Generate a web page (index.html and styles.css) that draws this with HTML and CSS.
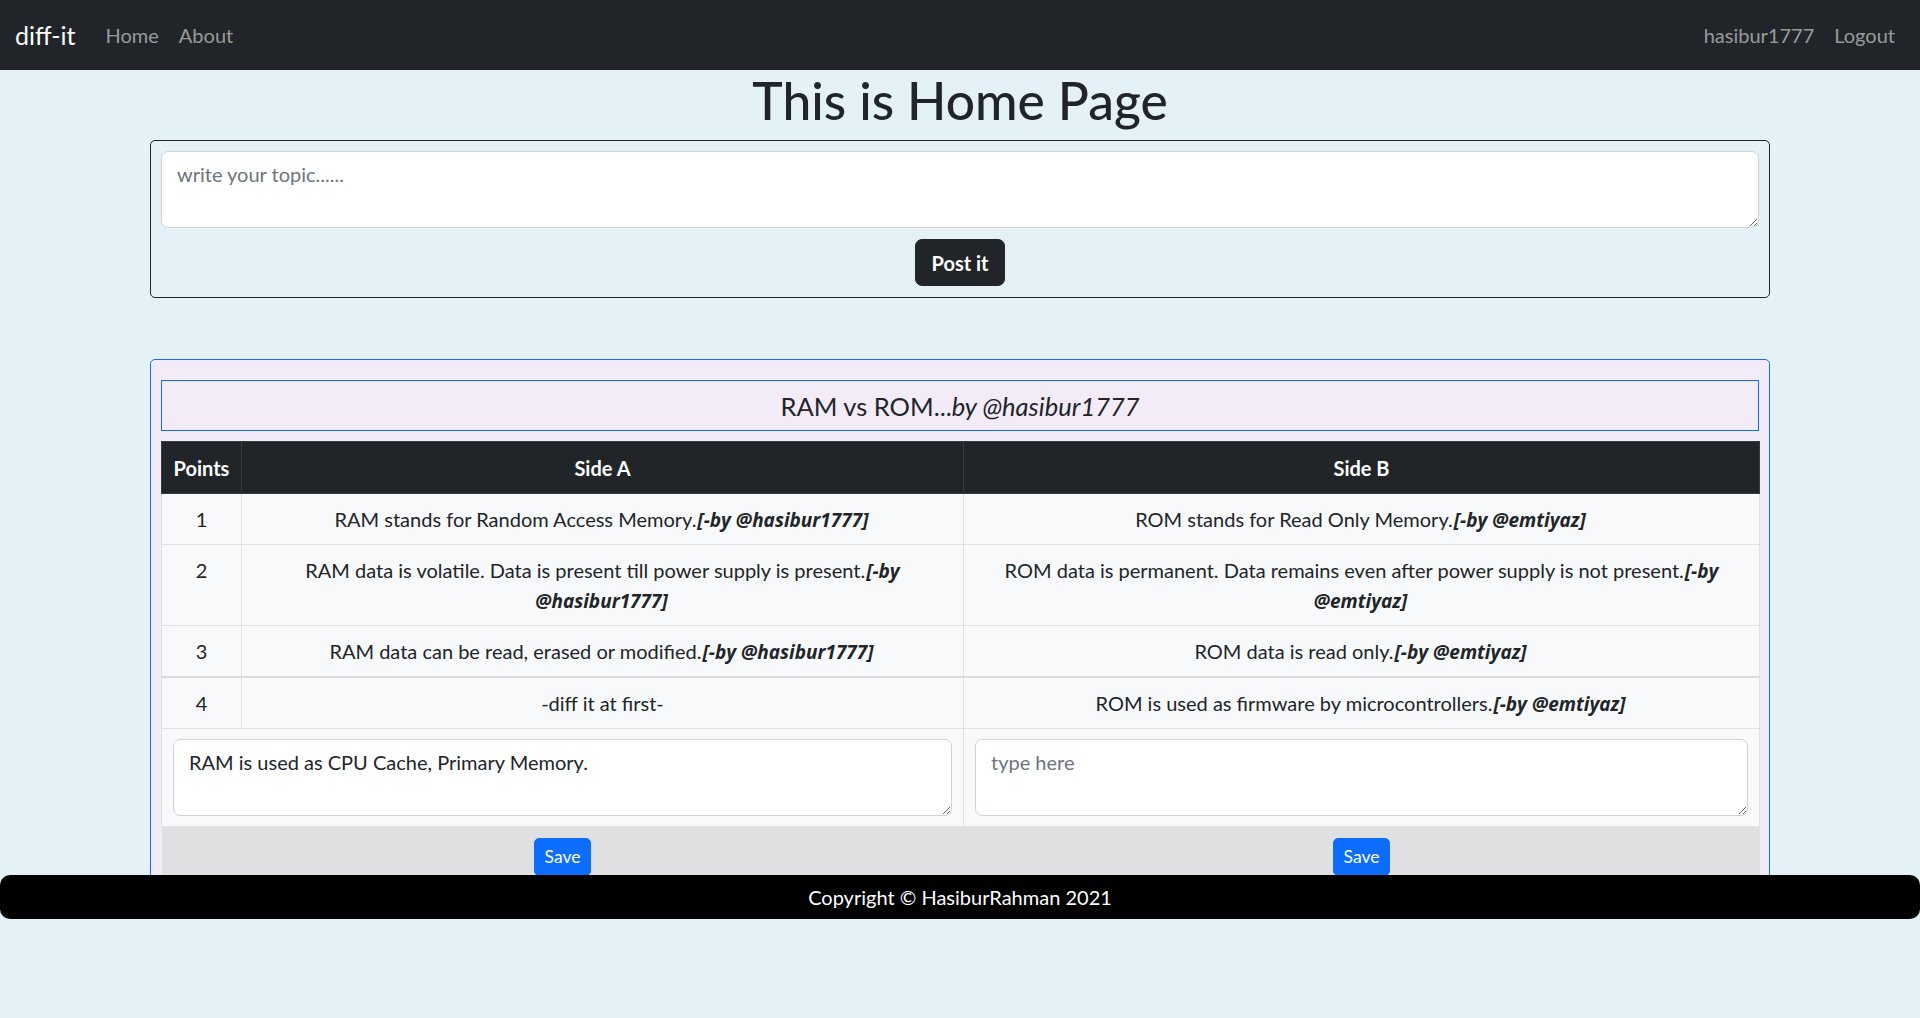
FILE: index.html
```html
<!DOCTYPE html>
<html lang="en">
<head>
<meta charset="utf-8">
<title>diff-it</title>
<link rel="stylesheet" href="styles.css">
</head>
<body>
<nav class="navbar">
  <div class="nav-group">
    <a class="brand" href="#">diff-it</a>
    <a class="nav-link" href="#">Home</a>
    <a class="nav-link" href="#">About</a>
  </div>
  <div class="nav-group">
    <a class="nav-link" href="#">hasibur1777</a>
    <a class="nav-link" href="#">Logout</a>
  </div>
</nav>
<main class="container">
  <h1 class="page-title">This is Home Page</h1>
  <form class="topic-form">
    <textarea class="form-control topic-input" placeholder="write your topic......"></textarea>
    <button type="button" class="btn btn-dark">Post it</button>
  </form>
  <section class="diff-card">
    <h5 class="diff-title">RAM vs ROM...<i>by @hasibur1777</i></h5>
    <table class="diff-table">
      <colgroup><col class="c-points"><col class="c-a"><col class="c-b"></colgroup>
      <thead>
        <tr><th>Points</th><th>Side A</th><th>Side B</th></tr>
      </thead>
      <tbody>
        <tr><td>1</td><td>RAM stands for Random Access Memory.<b class="by"><i>[-by @hasibur1777]</i></b></td><td>ROM stands for Read Only Memory.<b class="by"><i>[-by @emtiyaz]</i></b></td></tr>
        <tr><td>2</td><td>RAM data is volatile. Data is present till power supply is present.<b class="by"><i>[-by @hasibur1777]</i></b></td><td>ROM data is permanent. Data remains even after power supply is not present.<b class="by"><i>[-by @emtiyaz]</i></b></td></tr>
        <tr class="group-end"><td>3</td><td>RAM data can be read, erased or modified.<b class="by"><i>[-by @hasibur1777]</i></b></td><td>ROM data is read only.<b class="by"><i>[-by @emtiyaz]</i></b></td></tr>
      </tbody>
      <tbody>
        <tr><td>4</td><td>-diff it at first-</td><td>ROM is used as firmware by microcontrollers.<b class="by"><i>[-by @emtiyaz]</i></b></td></tr>
        <tr class="input-row">
          <td colspan="2"><textarea class="form-control cell-input">RAM is used as CPU Cache, Primary Memory.</textarea></td>
          <td><textarea class="form-control cell-input" placeholder="type here"></textarea></td>
        </tr>
        <tr class="save-row">
          <td colspan="2"><button type="button" class="btn btn-primary btn-sm">Save</button></td>
          <td><button type="button" class="btn btn-primary btn-sm">Save</button></td>
        </tr>
      </tbody>
    </table>
  </section>
</main>
<footer class="site-footer">Copyright © HasiburRahman 2021</footer>
</body>
</html>
```
FILE: styles.css
```css
* { box-sizing: border-box; }

html, body {
  margin: 0;
  height: 100%;
}

body {
  position: relative;
  background: #e4f2f7;
  color: #212529;
  font-family: Lato, "Open Sans", "Noto Sans", sans-serif;
  font-size: 20px;
  line-height: 30px;
}

a { text-decoration: none; }

.navbar {
  height: 70px;
  background: #212529;
  padding: 10px 15px;
  display: flex;
  justify-content: space-between;
  align-items: center;
}

.nav-group {
  display: flex;
  align-items: center;
}

.brand {
  color: #fff;
  font-size: 25px;
  line-height: 37px;
  padding: 6px 0;
  margin-right: 20px;
}

.nav-link {
  color: rgba(255, 255, 255, 0.55);
  font-size: 20px;
  line-height: 30px;
  padding: 10px 10px;
}

.container {
  width: 1650px;
  margin: 0 auto;
  padding: 0 15px;
}

.page-title {
  margin: 0 0 10px;
  font-size: 51.5px;
  line-height: 60px;
  font-weight: 500;
  text-align: center;
}

.topic-form {
  border: 1px solid #212529;
  border-radius: 5px;
  padding: 10px 10px 11px;
  display: flex;
  flex-direction: column;
  align-items: center;
}

.form-control {
  display: block;
  width: 100%;
  font-family: inherit;
  font-size: 20px;
  line-height: 30px;
  color: #212529;
  background: #fff;
  border: 1px solid #ced4da;
  border-radius: 7px;
  padding: 7px 15px;
}

.form-control::placeholder { color: #6c757d; }

.topic-input {
  height: 77px;
}

.btn {
  font-family: inherit;
  border-radius: 7px;
  cursor: pointer;
}

.btn-dark {
  margin-top: 11px;
  background: #212529;
  border: 1px solid #212529;
  color: #fff;
  font-weight: 700;
  font-size: 20px;
  line-height: 30px;
  padding: 7.5px 15px;
}

.btn-primary {
  background: #0d6efd;
  border: 1px solid #0d6efd;
  color: #fff;
}

.btn-sm {
  font-size: 17.5px;
  line-height: 26px;
  padding: 5px 10px;
  border-radius: 5px;
}

.diff-card {
  margin-top: 61px;
  border: 1px solid #0d6efd;
  border-radius: 5px;
  background: #f3ebf7;
  padding: 20px 10px 10px;
}

.diff-title {
  margin: 0 0 10px;
  border: 1px solid #0d6efd;
  font-size: 25.5px;
  font-weight: 400;
  line-height: 30px;
  padding: 10px 0 9px;
  text-align: center;
}

.diff-table {
  width: 100%;
  border-collapse: collapse;
  table-layout: fixed;
  text-align: center;
}

.c-points { width: 80px; }
.c-a { width: 722px; }
.c-b { width: 796px; }

.diff-table th {
  background: #212529;
  color: #fff;
  font-weight: 700;
  padding: 10.5px 8px;
  border: 1px solid #373b3e;
}

.diff-table td {
  background: #f8f9fa;
  padding: 10px 10px;
  border: 1px solid #dee2e6;
  vertical-align: top;
}

.by {
  font-family: "Open Sans", "Noto Sans", sans-serif;
  font-size: 19px;
  line-height: 20px;
  margin-left: 1px;
  padding-right: 2px;
}

.diff-table tr.group-end td {
  border-bottom: 2px solid #d8dadd;
}

.diff-table .input-row td {
  padding: 10px 11px;
}

.cell-input {
  height: 77px;
}

.diff-table .save-row td {
  background: #dfe0e2;
  border: none;
  padding: 11px 10px 12px;
}

.site-footer {
  position: absolute;
  top: 875px;
  left: 0;
  right: 0;
  height: 44px;
  background: #000;
  color: #fff;
  border-radius: 10px;
  text-align: center;
  line-height: 44px;
  font-size: 20px;
}
```
